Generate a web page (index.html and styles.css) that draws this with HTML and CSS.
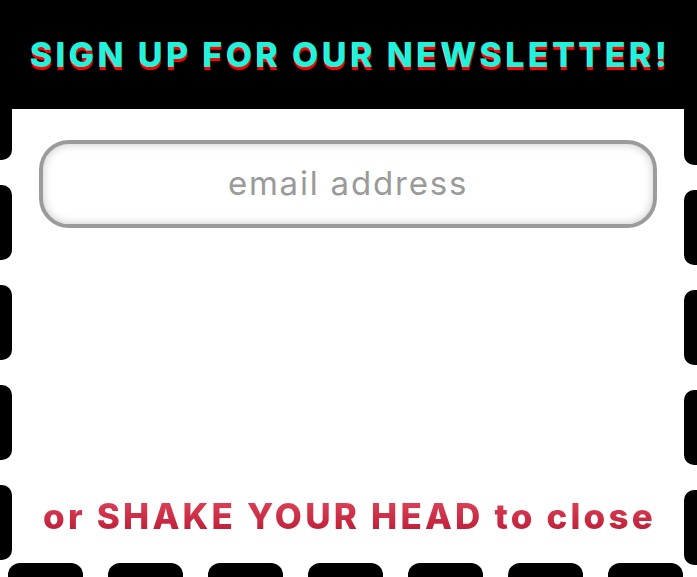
FILE: index.html
```html
<!DOCTYPE html>
<html>
<head>
<meta charset="utf-8">
<link rel="stylesheet" href="styles.css">
</head>
<body>
<div class="page">
  <header class="top">
    <h1 class="title">SIGN UP FOR OUR NEWSLETTER!</h1>
  </header>
  <div class="middle">
    <div class="edge edge-left">
      <span class="dash first"></span>
      <span class="dash"></span>
      <span class="dash"></span>
      <span class="dash"></span>
      <span class="dash"></span>
    </div>
    <main class="content">
      <input class="email" type="text" placeholder="email address">
      <p class="close">or SHAKE YOUR HEAD to close</p>
    </main>
    <div class="edge edge-right">
      <span class="dash first"></span>
      <span class="dash"></span>
      <span class="dash"></span>
      <span class="dash"></span>
      <span class="dash"></span>
    </div>
  </div>
  <div class="bottom">
    <span class="bdash"></span>
    <span class="bdash"></span>
    <span class="bdash"></span>
    <span class="bdash"></span>
    <span class="bdash"></span>
    <span class="bdash"></span>
    <span class="bdash"></span>
  </div>
</div>
</body>
</html>
```
FILE: styles.css
```css
html, body {
  margin: 0;
  padding: 0;
  background: #fff;
}
body {
  width: 697px;
  height: 577px;
  overflow: hidden;
  font-family: Inter, "Liberation Sans", sans-serif;
}
.page {
  display: flex;
  flex-direction: column;
  height: 577px;
}
.top {
  height: 109px;
  background: #000;
  display: flex;
  align-items: center;
  justify-content: center;
  flex-shrink: 0;
}
.title {
  margin: 0 0 0 3px;
  padding-top: 1px;
  font-size: 34px;
  font-weight: 800;
  letter-spacing: 3.4px;
  color: #1ff3dc;
  text-shadow: 0 3px 0 #ff0000;
  line-height: 1;
  white-space: nowrap;
}
.middle {
  display: flex;
  height: 454px;
  flex-shrink: 0;
}
.edge {
  display: flex;
  flex-direction: column;
  gap: 25px;
  flex-shrink: 0;
}
.edge-left { width: 12px; }
.edge-right { width: 13px; }
.dash {
  display: block;
  background: #000;
  height: 75px;
  flex-shrink: 0;
}
.edge-left .dash { border-radius: 0 10px 10px 0; }
.edge-right .dash { border-radius: 10px 0 0 10px; }
.edge-left .dash.first { height: 51px; border-radius: 0 0 10px 0; }
.edge-right .dash.first { height: 56px; border-radius: 0 0 0 10px; }
.content {
  flex: 1;
  min-width: 0;
  display: flex;
  flex-direction: column;
  align-items: center;
  justify-content: space-between;
  padding: 31px 27px 27px;
}
.email {
  box-sizing: border-box;
  width: 100%;
  height: 88px;
  border: 4px solid #9b9b9b;
  border-radius: 30px;
  box-shadow: inset 0 0 10px rgba(0, 0, 0, 0.22);
  background: #fff;
  font-family: Inter, "Liberation Sans", sans-serif;
  font-size: 33px;
  letter-spacing: 1.8px;
  text-align: center;
  color: #999;
  outline: none;
  padding: 0 0 2px;
}
.email::placeholder {
  color: #9a9a9a;
}
.close {
  margin: 0 0 0 3px;
  font-size: 35px;
  font-weight: 800;
  letter-spacing: 3.2px;
  line-height: 40px;
  background: linear-gradient(#e2465c, #b71a33);
  -webkit-background-clip: text;
  background-clip: text;
  color: transparent;
  white-space: nowrap;
}
.bottom {
  display: flex;
  gap: 25px;
  padding-left: 8px;
  height: 14px;
  flex-shrink: 0;
}
.bdash {
  display: block;
  width: 75px;
  height: 20px;
  background: #000;
  border-radius: 12px 12px 0 0;
  flex-shrink: 0;
}
```
